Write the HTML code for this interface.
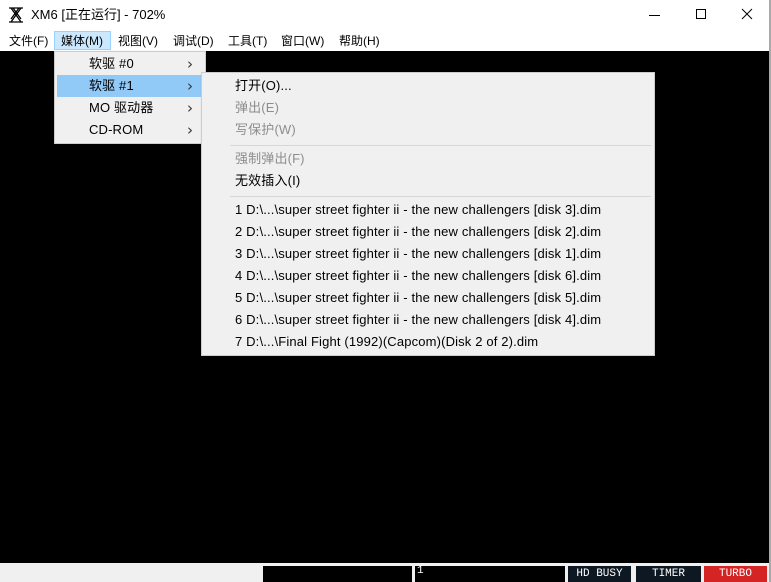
<!DOCTYPE html><html><head><meta charset="utf-8"><style>
*{margin:0;padding:0;box-sizing:border-box}
body{width:771px;height:582px;overflow:hidden;background:#fff;font-family:"Liberation Sans","Noto Sans CJK SC",sans-serif;font-size:12px;color:#000;position:relative}
.a{position:absolute;white-space:nowrap;line-height:16px}
.mi{position:absolute;top:33px;line-height:16px}
.dd{position:absolute;left:54px;top:51px;width:152px;height:93px;background:#f0f0f0;border:1px solid #ccc;box-shadow:2px 2px 3px rgba(0,0,0,.4)}
.sub{position:absolute;left:201px;top:72px;width:454px;height:284px;background:#f0f0f0;border:1px solid #ccc;box-shadow:2px 2px 3px rgba(0,0,0,.4)}
.g{color:#8d8d8d}
.f{font-size:13px;letter-spacing:0.15px}
.sep{position:absolute;left:28px;right:3px;height:1px;background:#d7d7d7}
.st{position:absolute;top:566px;height:16px;font-family:"Liberation Mono",monospace;font-size:11px;color:#fff;text-align:center;line-height:16px}
.ch{font-family:"DejaVu Sans",sans-serif;font-size:15px;color:#333}
</style></head><body>
<svg class="a" style="left:8px;top:7px" width="16" height="16" viewBox="0 0 16 16"><path d="M1 1h14M1 15h14M3 1l10 14M13 1L3 15M5 1l8 11M11 1L3 12" stroke="#000" stroke-width="1.3" fill="none"/></svg>
<div class="a" style="left:31px;top:7px;font-size:13px">XM6 [正在运行] - 702%</div>
<div class="a" style="left:649px;top:15px;width:11px;height:1px;background:#000"></div>
<div class="a" style="left:696px;top:9px;width:10px;height:10px;border:1px solid #000"></div>
<svg class="a" style="left:741px;top:8px" width="12" height="12"><path d="M1 1L11 11M11 1L1 11" stroke="#000" stroke-width="1"/></svg>
<div class="a" style="left:54px;top:31px;width:57px;height:19px;background:#cce8ff;border:1px solid #99d1ff"></div>
<div class="mi" style="left:9px">文件(F)</div>
<div class="mi" style="left:61px">媒体(M)</div>
<div class="mi" style="left:118px">视图(V)</div>
<div class="mi" style="left:173px">调试(D)</div>
<div class="mi" style="left:228px">工具(T)</div>
<div class="mi" style="left:281px">窗口(W)</div>
<div class="mi" style="left:339px">帮助(H)</div>
<div class="a" style="left:0;top:51px;width:770px;height:512px;background:#000"></div>
<div class="a" style="left:769px;top:0;width:2px;height:582px;background:#aaa"></div>
<div class="a" style="left:0;top:563px;width:769px;height:19px;background:#f0f0f0"></div>
<div class="dd">
<div class="a" style="left:2px;top:23px;width:144px;height:22px;background:#91c9f7"></div>
<div class="a f" style="left:34px;top:4px">软驱 #0</div><div class="a ch" style="left:132px;top:4px">›</div>
<div class="a f" style="left:34px;top:26px">软驱 #1</div><div class="a ch" style="left:132px;top:26px">›</div>
<div class="a f" style="left:34px;top:48px">MO 驱动器</div><div class="a ch" style="left:132px;top:48px">›</div>
<div class="a f" style="left:34px;top:70px">CD-ROM</div><div class="a ch" style="left:132px;top:70px">›</div>
</div>
<div class="sub">
<div class="a f" style="left:33px;top:5px">打开(O)...</div>
<div class="a g f" style="left:33px;top:27px">弹出(E)</div>
<div class="a g f" style="left:33px;top:49px">写保护(W)</div>
<div class="sep" style="top:72px"></div>
<div class="a g f" style="left:33px;top:78px">强制弹出(F)</div>
<div class="a f" style="left:33px;top:100px">无效插入(I)</div>
<div class="sep" style="top:123px"></div>
<div class="a f" style="left:33px;top:129px">1 D:\...\super street fighter ii - the new challengers [disk 3].dim</div>
<div class="a f" style="left:33px;top:151px">2 D:\...\super street fighter ii - the new challengers [disk 2].dim</div>
<div class="a f" style="left:33px;top:173px">3 D:\...\super street fighter ii - the new challengers [disk 1].dim</div>
<div class="a f" style="left:33px;top:195px">4 D:\...\super street fighter ii - the new challengers [disk 6].dim</div>
<div class="a f" style="left:33px;top:217px">5 D:\...\super street fighter ii - the new challengers [disk 5].dim</div>
<div class="a f" style="left:33px;top:239px">6 D:\...\super street fighter ii - the new challengers [disk 4].dim</div>
<div class="a f" style="left:33px;top:261px">7 D:\...\Final Fight (1992)(Capcom)(Disk 2 of 2).dim</div>
</div>
<div class="st" style="left:263px;width:149px;background:#000"></div>
<div class="st" style="left:415px;width:150px;background:#000;text-align:left;padding-left:2px;line-height:11px">1</div>
<div class="st" style="left:568px;width:63px;background:#0e1822">HD BUSY</div>
<div class="st" style="left:636px;width:65px;background:#0e1822">TIMER</div>
<div class="st" style="left:704px;width:63px;background:#d42424">TURBO</div>
</body></html>
